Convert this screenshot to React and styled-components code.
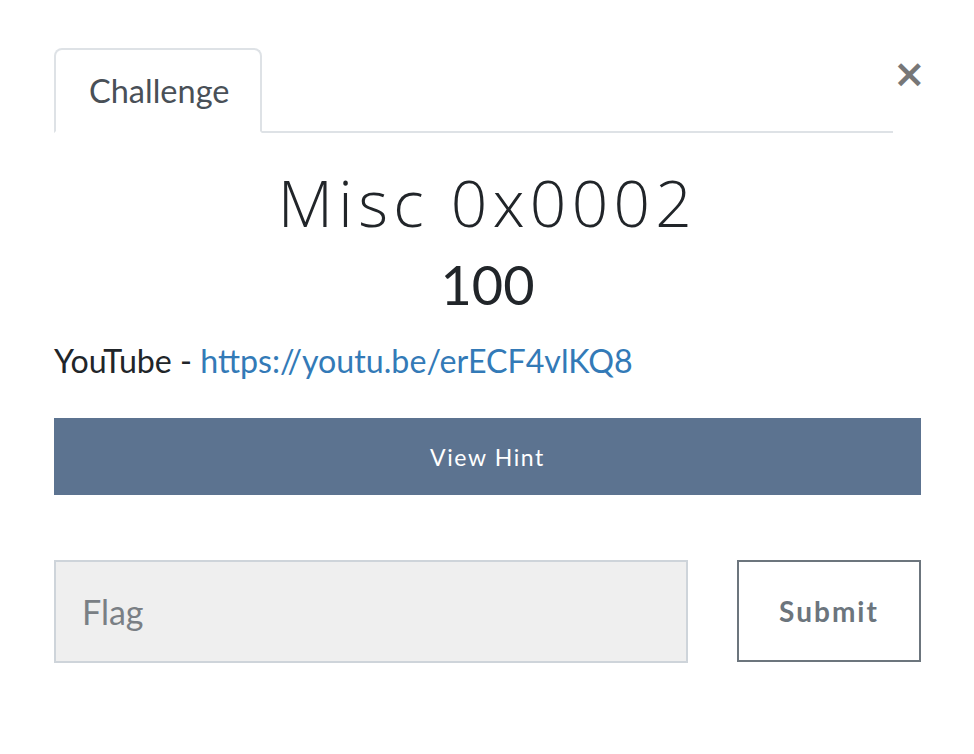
import React from 'react';
import styled, { createGlobalStyle } from 'styled-components';

const GlobalStyle = createGlobalStyle`
  body {
    margin: 0;
    background: #fff;
    font-family: Lato, 'Open Sans', sans-serif;
  }
`;

const Modal = styled.div`
  width: 974px;
  height: 754px;
  box-sizing: border-box;
  padding: 48px 53px 0 54px;
`;

const Header = styled.div`
  display: flex;
  align-items: flex-start;
`;

const Nav = styled.div`
  flex: 1;
  display: flex;
  border-bottom: 2px solid #dee2e6;
`;

const Tab = styled.div`
  height: 81px;
  padding: 0 31px 0 33px;
  display: flex;
  align-items: center;
  font-size: 32.5px;
  color: #495057;
  border: 2px solid #dee2e6;
  border-bottom: 2px solid #fff;
  margin-bottom: -2px;
  border-radius: 8px 8px 0 0;
  background: #fff;
`;

const Close = styled.button`
  width: 28px;
  margin-top: 6px;
  padding: 0;
  border: none;
  background: none;
  color: #777;
  font-family: 'DejaVu Sans', sans-serif;
  font-weight: 700;
  font-size: 39px;
  line-height: 39px;
  cursor: pointer;
`;

const Title = styled.h2`
  margin: 34px 0 0;
  text-align: center;
  font-family: 'Open Sans', sans-serif;
  font-weight: 300;
  font-size: 64px;
  letter-spacing: 5.3px;
  line-height: 72px;
  color: #212529;
`;

const Points = styled.h3`
  margin: 14px 0 0;
  text-align: center;
  font-size: 54px;
  font-weight: 400;
  line-height: 64px;
  color: #212529;
`;

const Description = styled.p`
  margin: 21px 0 0;
  font-size: 32.2px;
  line-height: 46px;
  color: #212529;

  a {
    color: #337ab7;
    text-decoration: none;
  }
`;

const HintButton = styled.button`
  display: block;
  width: 100%;
  height: 77px;
  margin-top: 34px;
  border: none;
  background: #5c7390;
  color: #fff;
  font-family: Lato, sans-serif;
  font-size: 23px;
  letter-spacing: 1.6px;
  cursor: pointer;
`;

const SubmitRow = styled.div`
  display: flex;
  margin-top: 65px;
  gap: 49px;
`;

const FlagInput = styled.input`
  flex: 1;
  height: 103px;
  box-sizing: border-box;
  padding: 0 26px;
  background: #efefef;
  border: 2px solid #ced4da;
  font-family: Lato, sans-serif;
  font-size: 34px;
  color: #495057;
  outline: none;

  &::placeholder {
    color: #7a7f85;
  }
`;

const SubmitButton = styled.button`
  width: 184px;
  height: 102px;
  box-sizing: border-box;
  background: #fff;
  border: 2px solid #6c757d;
  color: #6c757d;
  font-family: Lato, sans-serif;
  font-weight: 700;
  font-size: 28px;
  letter-spacing: 2px;
  cursor: pointer;
`;

export default function App() {
  return (
    <>
      <GlobalStyle />
      <Modal>
        <Header>
          <Nav>
            <Tab>Challenge</Tab>
          </Nav>
          <Close>×</Close>
        </Header>
        <Title>Misc 0x0002</Title>
        <Points>100</Points>
        <Description>
          YouTube - <a href="#">https://youtu.be/erECF4vlKQ8</a>
        </Description>
        <HintButton>View Hint</HintButton>
        <SubmitRow>
          <FlagInput placeholder="Flag" />
          <SubmitButton>Submit</SubmitButton>
        </SubmitRow>
      </Modal>
    </>
  );
}
